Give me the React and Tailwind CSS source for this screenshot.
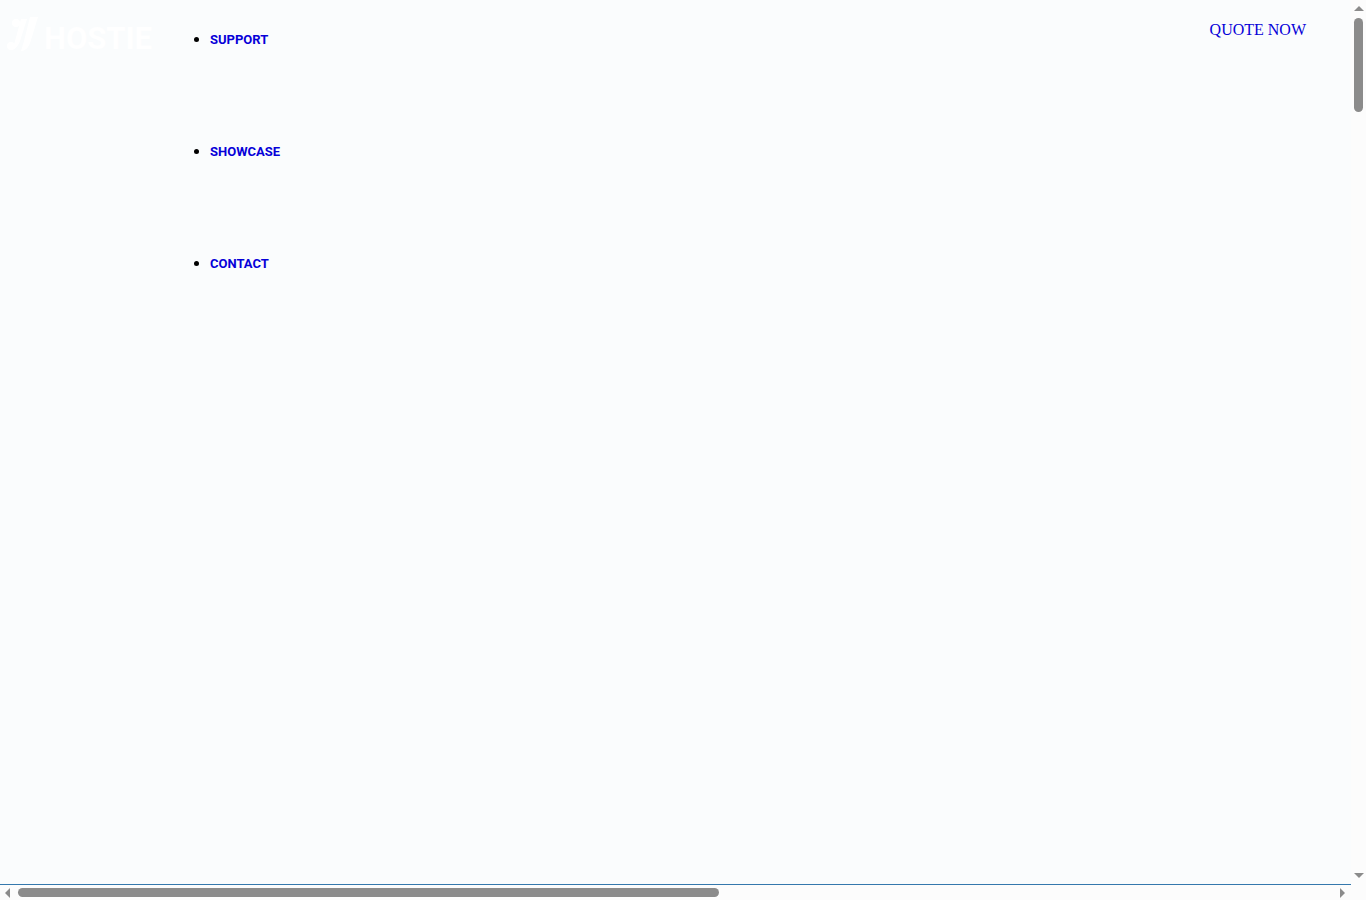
const links = [
  { label: 'SUPPORT', href: '#support' },
  { label: 'SHOWCASE', href: '#showcase' },
  { label: 'CONTACT', href: '#contact' },
];

function Logo() {
  return (
    <a href="#home" aria-label="Home" className="block w-40 shrink-0 pt-3">
      <svg viewBox="0 0 160 48" className="w-full" fill="#ffffff">
        <path d="M21 7h6l-6 19c-2 7-5 11-9 12l3-9z" />
        <path d="M30 5h8l-7 23c-2 7-5 11-10 11l3-10z" />
        <circle cx="16" cy="11" r="4" />
        <circle cx="11" cy="34" r="4" />
        <text x="44" y="37" fontSize="31" fontWeight="700" className="font-['Roboto',sans-serif]">HOSTIE</text>
      </svg>
    </a>
  );
}

function Header() {
  return (
    <header className="flex items-start">
      <Logo />
      <nav className="flex-1 pt-[11px]">
        <ul className="list-disc pl-[50px] font-['Liberation_Serif',serif] text-base text-black">
          {links.map((link) => (
            <li key={link.label} className="h-28 leading-[56px]">
              <a href={link.href} className="font-['Roboto',sans-serif] text-[13px] font-bold text-[#0600d8]">
                {link.label}
              </a>
            </li>
          ))}
        </ul>
      </nav>
      <a
        href="#quote"
        className="mr-[45px] pt-5 font-['Liberation_Serif',serif] text-base leading-5 text-[#0600d8]"
      >
        QUOTE NOW
      </a>
    </header>
  );
}

function VerticalScrollbar() {
  return (
    <div className="flex w-[15px] shrink-0 flex-col items-center bg-[#fcfcfc] pt-[6px] pb-[7px]">
      <svg viewBox="0 0 10 5" className="w-[10px] shrink-0" fill="#8b8b8b">
        <path d="M0 5L5 0l5 5z" />
      </svg>
      <div className="flex-1 pt-[7px]">
        <div className="h-[11%] w-[9px] rounded-full bg-[#8b8b8b]" />
      </div>
      <svg viewBox="0 0 10 5" className="w-[10px] shrink-0" fill="#8b8b8b">
        <path d="M0 0l5 5 5-5z" />
      </svg>
    </div>
  );
}

function HorizontalScrollbar() {
  return (
    <div className="flex h-[15px] items-center bg-[#fcfcfc] pr-[21px] pl-[5px]">
      <svg viewBox="0 0 5 10" className="h-[10px] shrink-0" fill="#8b8b8b">
        <path d="M5 0L0 5l5 5z" />
      </svg>
      <div className="flex-1 pl-2">
        <div className="h-[9px] w-[53%] rounded-full bg-[#8b8b8b]" />
      </div>
      <svg viewBox="0 0 5 10" className="h-[10px] shrink-0" fill="#8b8b8b">
        <path d="M0 0l5 5-5 5z" />
      </svg>
    </div>
  );
}

export default function App() {
  return (
    <div className="flex h-screen flex-col overflow-hidden bg-[#fafcfd]">
      <div className="flex min-h-0 flex-1">
        <main className="min-w-0 flex-1 border-b border-[#3478ad]">
          <Header />
        </main>
        <VerticalScrollbar />
      </div>
      <HorizontalScrollbar />
    </div>
  );
}
